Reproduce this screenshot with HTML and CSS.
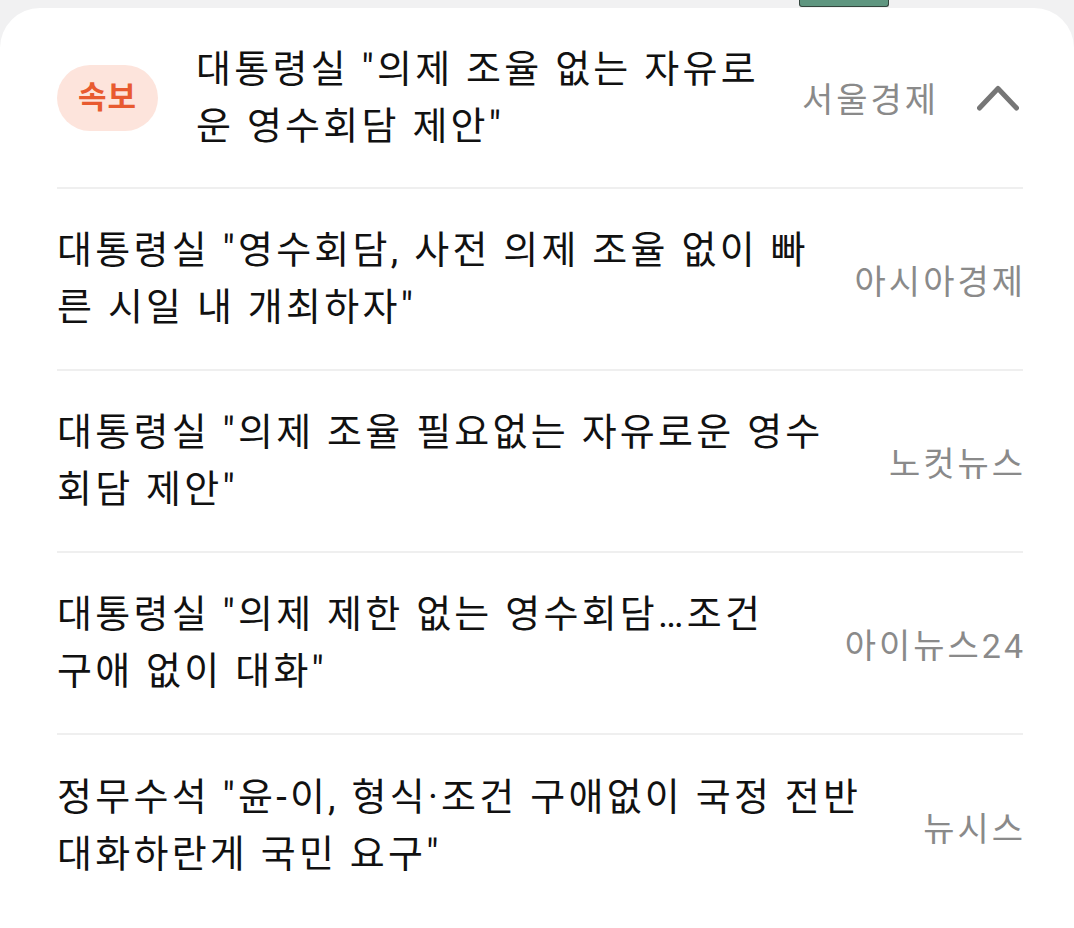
FILE: index.html
```html
<!DOCTYPE html>
<html lang="ko">
<head>
    <meta charset="UTF-8">
    <meta name="viewport" content="width=device-width, initial-scale=1.0">
    <title>속보 - 관련 기사</title>
    <link rel="stylesheet" href="styles.css">
</head>
<body>
    <div class="top-strip">
        <div class="tab"></div>
    </div>

    <div class="news-card">
        <div class="news-item headline-item">
            <span class="badge">속보</span>
            <div class="title">대통령실 "의제 조율 없는 자유로운 영수회담 제안"</div>
            <div class="source">서울경제</div>
            <button class="collapse-btn" aria-label="접기">
                <svg width="42" height="26" viewBox="0 0 42 26">
                    <polyline points="2.5,23 21,3.5 39.5,23" fill="none" stroke="#767676" stroke-width="5" stroke-linecap="round" stroke-linejoin="round"/>
                </svg>
            </button>
        </div>

        <div class="news-item">
            <div class="title">대통령실 "영수회담, 사전 의제 조율 없이 빠른 시일 내 개최하자"</div>
            <div class="source">아시아경제</div>
        </div>

        <div class="news-item">
            <div class="title">대통령실 "의제 조율 필요없는 자유로운 영수회담 제안"</div>
            <div class="source">노컷뉴스</div>
        </div>

        <div class="news-item">
            <div class="title">대통령실 "의제 제한 없는 영수회담…조건 구애 없이 대화"</div>
            <div class="source">아이뉴스24</div>
        </div>

        <div class="news-item">
            <div class="title">정무수석 "윤-이, 형식·조건 구애없이 국정 전반 대화하란게 국민 요구"</div>
            <div class="source">뉴시스</div>
        </div>
    </div>
</body>
</html>
```

FILE: styles.css
```css
body {
    margin: 0;
    padding: 0;
    background-color: #f1f1f2;
    font-family: Roboto, "Noto Sans CJK KR", sans-serif;
}

.top-strip {
    height: 8px;
    overflow: hidden;
}

.tab {
    margin-left: 799px;
    width: 88px;
    height: 6px;
    background-color: #5f9680;
    border: 1px solid #33453d;
    border-top: none;
    border-radius: 0 0 3px 3px;
}

.news-card {
    background-color: #fff;
    border-radius: 40px 40px 0 0;
    padding: 0 51px 0 57px;
    height: 920px;
    box-sizing: border-box;
}

.news-item {
    display: flex;
    align-items: center;
    gap: 44px;
    height: 182px;
    border-bottom: 2px solid #efefef;
    box-sizing: border-box;
}

.news-item:last-child {
    border-bottom: none;
}

.headline-item {
    height: 181px;
    gap: 38px;
}

.title {
    flex: 1;
    font-size: 38px;
    line-height: 57px;
    color: #111;
    letter-spacing: 3.25px;
}

.source {
    flex: none;
    margin-right: -3px;
    font-size: 34px;
    color: #8a8a8a;
    letter-spacing: 3px;
}

.badge {
    flex: none;
    width: 101px;
    height: 66px;
    line-height: 66px;
    margin-right: 0;
    border-radius: 33px;
    background-color: #fde4dc;
    color: #e85a30;
    font-size: 31px;
    font-weight: 700;
    letter-spacing: 1px;
    text-align: center;
}

.collapse-btn {
    flex: none;
    display: flex;
    align-items: center;
    padding: 0;
    margin-left: 3px;
    margin-right: 4px;
    border: none;
    background: none;
    cursor: pointer;
}
```
